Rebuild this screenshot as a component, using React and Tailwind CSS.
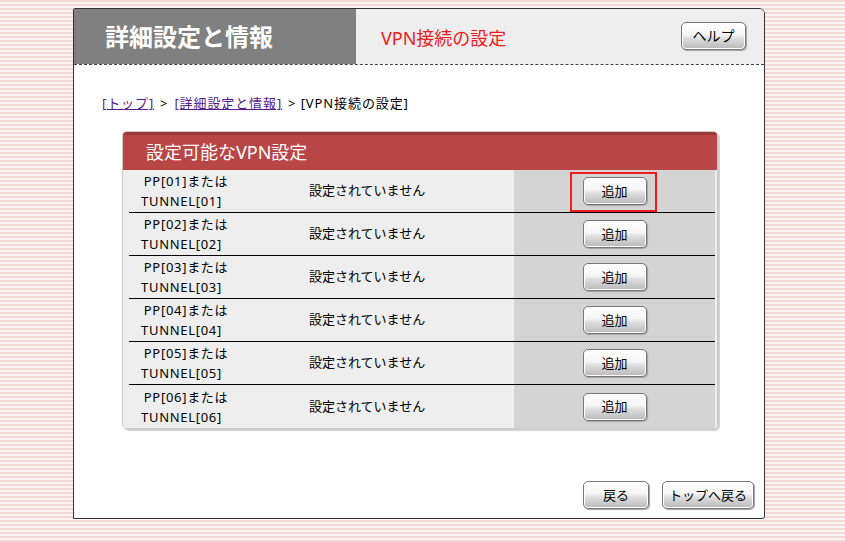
import React from 'react';

const font = { fontFamily: '"Noto Sans", "Noto Sans CJK JP", sans-serif' };

const Btn = ({ children, className = '' }) => (
  <button
    type="button"
    className={"h-[28px] rounded-[5px] border border-[#777] text-[13px] text-black bg-[linear-gradient(to_bottom,#ffffff_0%,#f6f6f6_45%,#dedede_58%,#b9b9b9_100%)] shadow-[inset_0_0_0_1px_#fff,1px_1px_1px_#a0a0a0] leading-none " + className}
  >
    {children}
  </button>
);

const rows = ['01', '02', '03', '04', '05', '06'];

const App = () => {
  return (
    <div style={font} className="w-full h-[542px] pt-[8px] pl-[73px] bg-[repeating-linear-gradient(to_bottom,#f4d8d8_0px,#f4d8d8_2px,#fcf3f3_2px,#fcf3f3_4px)]">
      <div className="w-[692px] h-[511px] bg-white border border-[#333] rounded-tr-[6px] rounded-br-[3px] rounded-tl-[2px] flex flex-col overflow-hidden">

        {/* Header */}
        <div className="h-[56px] flex border-b border-dashed border-[#444] shrink-0">
          <div className="w-[282px] bg-[#808080] pl-[31px] flex items-center">
            <span className="text-white font-bold text-[24px]">詳細設定と情報</span>
          </div>
          <div className="flex-1 bg-[#eeeeee] flex items-center justify-between pl-[25px] pr-[18px]">
            <span className="text-[#ee1c1c] text-[18px] pt-[4px]">VPN接続の設定</span>
            <Btn className="w-[65px] h-[27px] text-[14px] mb-[2px]">ヘルプ</Btn>
          </div>
        </div>

        {/* Breadcrumb */}
        <div className="pl-[28px] pt-[29px] h-[50px] text-[13px] tracking-[0.9px] text-black flex items-start gap-[6px]">
          <a href="#" className="text-[#551a8b] underline">[トップ]</a>
          <span>&gt;</span>
          <a href="#" className="text-[#551a8b] underline">[詳細設定と情報]</a>
          <span>&gt; [VPN接続の設定]</span>
        </div>

        {/* Table */}
        <div className="ml-[48px] mt-[16px] w-[596px] rounded-[5px] border border-[#c8c8c8] shadow-[2px_2px_1px_#d0d0d0] overflow-hidden">
          <div className="h-[38px] bg-[#b94646] border-t-[3px] border-[#9d3838] flex items-center pl-[23px]">
            <span className="text-white text-[18px]">設定可能なVPN設定</span>
          </div>
          <div className="bg-[#eeeeee] pl-[6px] pr-[2px]">
            {rows.map((n, i) => (
              <div key={n} className={"flex h-[43px] text-[13px] text-black " + (i < rows.length - 1 ? 'border-b border-black' : '')}>
                <div className="w-[105px] flex flex-col items-center justify-center leading-[20px] tracking-[0.7px]">
                  <span className="pl-[9px]">PP[{n}]または</span>
                  <span>TUNNEL[{n}]</span>
                </div>
                <div className="flex-1 pl-[75px] flex items-center">設定されていません</div>
                <div className="w-[201px] bg-[#d4d4d4] flex items-center justify-center">
                  <div className="relative">
                    <Btn className="w-[64px]">追加</Btn>
                    {i === 0 && (
                      <div className="absolute left-[-13px] right-[-10px] top-[-5px] bottom-[-7px] border-[2px] border-[#ee1c1c]"></div>
                    )}
                  </div>
                </div>
              </div>
            ))}
          </div>
        </div>

        {/* Footer buttons */}
        <div className="mt-auto flex justify-end gap-[13px] pr-[10px] pb-[9px]">
          <Btn className="w-[66px]">戻る</Btn>
          <Btn className="w-[92px]">トップへ戻る</Btn>
        </div>
      </div>
    </div>
  );
};

export default App;
